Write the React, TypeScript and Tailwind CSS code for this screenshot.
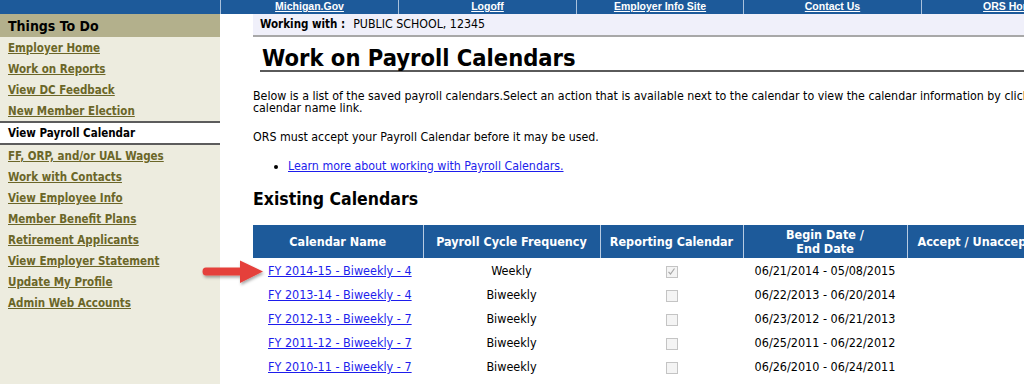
const navLinks = ['Michigan.Gov', 'Logoff', 'Employer Info Site', 'Contact Us', 'ORS Home'];

const menu = [
  'Employer Home',
  'Work on Reports',
  'View DC Feedback',
  'New Member Election',
  'View Payroll Calendar',
  'FF, ORP, and/or UAL Wages',
  'Work with Contacts',
  'View Employee Info',
  'Member Benefit Plans',
  'Retirement Applicants',
  'View Employer Statement',
  'Update My Profile',
  'Admin Web Accounts',
];

const calendars = [
  { name: 'FY 2014-15 - Biweekly - 4', freq: 'Weekly', reporting: true, dates: '06/21/2014 - 05/08/2015' },
  { name: 'FY 2013-14 - Biweekly - 4', freq: 'Biweekly', reporting: false, dates: '06/22/2013 - 06/20/2014' },
  { name: 'FY 2012-13 - Biweekly - 7', freq: 'Biweekly', reporting: false, dates: '06/23/2012 - 06/21/2013' },
  { name: 'FY 2011-12 - Biweekly - 7', freq: 'Biweekly', reporting: false, dates: '06/25/2011 - 06/22/2012' },
  { name: 'FY 2010-11 - Biweekly - 7', freq: 'Biweekly', reporting: false, dates: '06/26/2010 - 06/24/2011' },
];

function Checkbox({ checked }: { checked: boolean }) {
  return (
    <div className="mx-auto w-[12px] h-[12px] border border-[#c4c4c4] bg-[#f4f4f4] flex items-center justify-center">
      {checked && (
        <svg width="9" height="9" viewBox="0 0 9 9">
          <path d="M1.5 4.8 L3.5 7 L7.5 1.5" fill="none" stroke="#a8a8a8" strokeWidth="1.2" />
        </svg>
      )}
    </div>
  );
}

function Arrow() {
  return (
    <svg className="absolute left-[200px] top-[258px]" width="68" height="30" viewBox="0 0 68 30">
      <defs>
        <filter id="sh" x="-20%" y="-30%" width="140%" height="160%">
          <feDropShadow dx="1" dy="2" stdDeviation="1.5" floodColor="#000" floodOpacity="0.35" />
        </filter>
      </defs>
      <path
        d="M6 9.5 L40 9.5 L40 2.5 L63 13.5 L40 25 L40 17.5 L6 17.5 Q2.5 17.5 2.5 13.5 Q2.5 9.5 6 9.5 Z"
        fill="#e5403a"
        filter="url(#sh)"
      />
    </svg>
  );
}

export default function App() {
  return (
    <div className="relative w-[1024px] h-[384px] overflow-hidden bg-white font-['DejaVu_Sans_Condensed','DejaVu_Sans',sans-serif] text-[12.3px] text-black">
      {/* Top nav */}
      <div className="flex h-[14px] bg-[#1d5a9a] font-['Liberation_Sans',Arial,sans-serif]">
        <div className="w-[221px] shrink-0 border-r border-[#a9c1dc]" />
        {navLinks.map((l, i) => (
          <div
            key={l}
            className={`shrink-0 flex items-start justify-center border-r border-[#a9c1dc] ${i === 2 ? 'w-[167px]' : 'w-[178px]'}`}
          >
            <a className="text-white font-bold text-[10.5px] leading-[12px] underline">{l}</a>
          </div>
        ))}
      </div>

      <div className="flex h-[370px]">
        {/* Sidebar */}
        <aside className="w-[220px] shrink-0 bg-[#edecdf]">
          <div className="h-[23px] bg-[#b3b08c] pl-[8px] pt-[1px] flex items-center font-bold text-[14px]">Things To Do</div>
          {menu.map((m) =>
            m === 'View Payroll Calendar' ? (
              <div
                key={m}
                className="h-[24px] border-y-2 border-[#5c5c5c] bg-white pl-[8px] pt-[1px] flex items-center font-bold text-[11.5px] text-black"
              >
                {m}
              </div>
            ) : (
              <div key={m} className="h-[21px] pl-[8px] pt-[2px] flex items-center">
                <a className="font-bold text-[11.5px] text-[#6b6628] underline">{m}</a>
              </div>
            )
          )}
        </aside>

        {/* Main */}
        <main className="shrink-0 w-[900px] pl-[33px]">
          <div className="h-[23px] bg-[#f0f0fa] border-b-2 border-[#a8a8a8] pl-[7px] flex items-center">
            <span className="font-bold text-[11.5px] mr-[8px]">Working with :</span>
            <span>PUBLIC SCHOOL, 12345</span>
          </div>

          <div className="ml-[7px] mt-[7px] h-[28px] border-b-2 border-[#5a5a5a] flex items-end">
            <h1 className="font-bold text-[23.5px] leading-[24px] pl-[2px]">Work on Payroll Calendars</h1>
          </div>

          <p className="mt-[18px] leading-[12px] whitespace-nowrap">
            Below is a list of the saved payroll calendars.Select an action that is available next to the calendar to view the calendar information by clicking the
            <br />
            calendar name link.
          </p>

          <p className="mt-[17px] leading-[12px]">ORS must accept your Payroll Calendar before it may be used.</p>

          <ul className="mt-[17px] ml-[22px] list-disc pl-[13px] leading-[12px]">
            <li>
              <a className="text-[#1d1dec] underline">Learn more about working with Payroll Calendars.</a>
            </li>
          </ul>

          <h2 className="mt-[17px] font-bold text-[17.5px] leading-[20px]">Existing Calendars</h2>

          <table className="mt-[16px] table-fixed border-collapse w-[860px]">
            <colgroup>
              <col className="w-[170px]" />
              <col className="w-[177px]" />
              <col className="w-[143px]" />
              <col className="w-[164px]" />
              <col className="w-[206px]" />
            </colgroup>
            <thead>
              <tr className="h-[33px] bg-[#1d5a9a] text-white font-bold text-[12.5px] leading-[14px]">
                <th className="border-r border-[#b7cbe2] text-center">Calendar Name</th>
                <th className="border-r border-[#b7cbe2] text-center">Payroll Cycle Frequency</th>
                <th className="border-r border-[#b7cbe2] text-center">Reporting Calendar</th>
                <th className="border-r border-[#b7cbe2] text-center">
                  Begin Date /<br />
                  End Date
                </th>
                <th className="text-left pl-[10px] whitespace-nowrap">Accept / Unaccept</th>
              </tr>
            </thead>
            <tbody>
              {calendars.map((c) => (
                <tr key={c.name} className="h-[24px] text-[12.5px]">
                  <td className="pl-[15px] pt-[3px]">
                    <a className="text-[#1d1dec] underline">{c.name}</a>
                  </td>
                  <td className="text-center pt-[3px]">{c.freq}</td>
                  <td className="text-center pt-[3px]">
                    <Checkbox checked={c.reporting} />
                  </td>
                  <td className="text-center pt-[3px]">{c.dates}</td>
                  <td />
                </tr>
              ))}
            </tbody>
          </table>
        </main>
      </div>

      <Arrow />
    </div>
  );
}
